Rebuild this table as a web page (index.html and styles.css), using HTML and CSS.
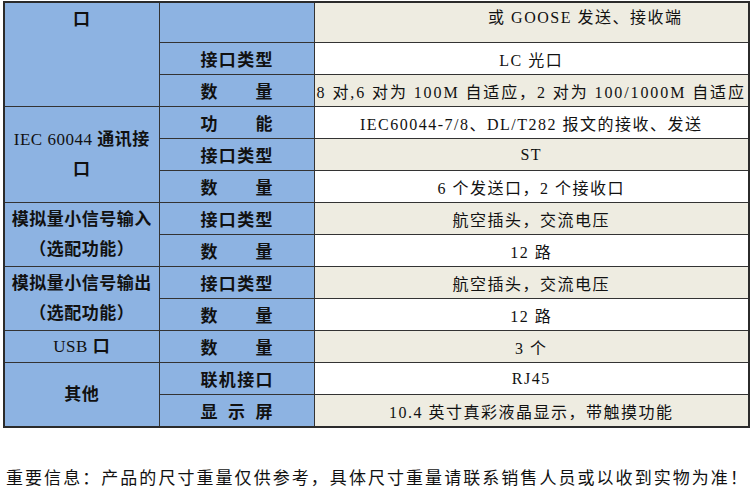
FILE: index.html
```html
<!DOCTYPE html>
<html lang="zh-CN">
<head>
<meta charset="utf-8">
<title>技术参数</title>
<link rel="stylesheet" href="styles.css">
</head>
<body>
<table class="spec">
  <colgroup>
    <col class="c1"><col class="c2"><col class="c3">
  </colgroup>
  <tr class="first">
    <td class="cat top" rowspan="3">口</td>
    <td class="lab"></td>
    <td class="val alt cont">或 GOOSE 发送、接收端</td>
  </tr>
  <tr>
    <td class="lab"><span class="j">接口类型</span></td>
    <td class="val">LC 光口</td>
  </tr>
  <tr>
    <td class="lab"><span class="j">数 量</span></td>
    <td class="val alt wide">8 对,6 对为 100M 自适应，2 对为 100/1000M 自适应</td>
  </tr>
  <tr>
    <td class="cat" rowspan="3"><span class="lat">IEC 60044</span> 通讯接<br>口</td>
    <td class="lab"><span class="j">功 能</span></td>
    <td class="val">IEC60044-7/8、DL/T282 报文的接收、发送</td>
  </tr>
  <tr>
    <td class="lab"><span class="j">接口类型</span></td>
    <td class="val alt">ST</td>
  </tr>
  <tr>
    <td class="lab"><span class="j">数 量</span></td>
    <td class="val">6 个发送口，2 个接收口</td>
  </tr>
  <tr>
    <td class="cat" rowspan="2">模拟量小信号输入<br>（选配功能）</td>
    <td class="lab"><span class="j">接口类型</span></td>
    <td class="val alt">航空插头，交流电压</td>
  </tr>
  <tr>
    <td class="lab"><span class="j">数 量</span></td>
    <td class="val">12 路</td>
  </tr>
  <tr>
    <td class="cat" rowspan="2">模拟量小信号输出<br>（选配功能）</td>
    <td class="lab"><span class="j">接口类型</span></td>
    <td class="val alt">航空插头，交流电压</td>
  </tr>
  <tr>
    <td class="lab"><span class="j">数 量</span></td>
    <td class="val">12 路</td>
  </tr>
  <tr>
    <td class="cat"><span class="lat">USB</span> 口</td>
    <td class="lab"><span class="j">数 量</span></td>
    <td class="val alt">3 个</td>
  </tr>
  <tr>
    <td class="cat" rowspan="2">其他</td>
    <td class="lab"><span class="j">联机接口</span></td>
    <td class="val">RJ45</td>
  </tr>
  <tr>
    <td class="lab"><span class="j">显 示 屏</span></td>
    <td class="val alt">10.4 英寸真彩液晶显示，带触摸功能</td>
  </tr>
</table>
<p class="note">重要信息：产品的尺寸重量仅供参考，具体尺寸重量请联系销售人员或以收到实物为准！</p>
</body>
</html>
```

FILE: styles.css
```css
html, body {
  margin: 0;
  padding: 0;
  background: #ffffff;
}
body {
  width: 750px;
  height: 489px;
  overflow: hidden;
  color: #111;
  font-family: "Liberation Serif", "Noto Sans CJK SC", serif;
}
.spec {
  margin: 1px 0 0 3px;
  width: 745px;
  border-collapse: collapse;
  table-layout: fixed;
  border: 2px solid #2b2b2b;
}
.c1 { width: 155px; }
.c2 { width: 155px; }
.c3 { width: 435px; }
.spec td {
  border: 1px solid #333;
  height: 31px;
  padding: 0;
  text-align: center;
  vertical-align: middle;
  white-space: nowrap;
}
.spec tr.first td { height: 39px; }
.cat {
  background: #8db3e2;
  font-family: "Liberation Serif", "Noto Sans CJK SC", sans-serif;
  font-weight: 700;
  font-size: 17px;
  line-height: 30px;
  letter-spacing: 0.5px;
}
.cat.top { vertical-align: top; padding-top: 2px; }
.lat {
  font-weight: 400;
  letter-spacing: 0.5px;
}
.lab {
  background: #8db3e2;
  font-family: "Noto Sans CJK SC", sans-serif;
  font-weight: 700;
  font-size: 17px;
}
.j {
  display: inline-block;
  width: 72px;
  text-align: justify;
  text-align-last: justify;
  text-justify: inter-character;
  line-height: 24px;
}
.val {
  background: #ffffff;
  font-family: "Liberation Serif", "Noto Sans CJK SC", serif;
  font-size: 16px;
  letter-spacing: 1.5px;
  border-top-color: #666;
}
.val.alt { background: #eeece1; }
.spec tr.first td.cont {
  vertical-align: top;
  height: 35px;
  padding: 4px 0 0 108px;
  line-height: 22px;
}
.val.wide { letter-spacing: 1.9px; }
.note {
  margin: 39px 0 0 6px;
  font-family: "Noto Sans CJK SC", sans-serif;
  font-weight: 400;
  font-size: 17px;
  line-height: 20px;
  letter-spacing: 2.05px;
  color: #111;
  white-space: nowrap;
}
```
